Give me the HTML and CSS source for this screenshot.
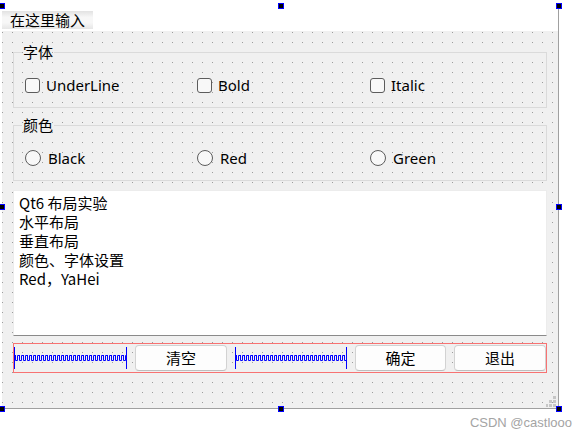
FILE: index.html
```html
<!DOCTYPE html>
<html lang="zh-CN">
<head>
<meta charset="utf-8">
<title>Qt Designer Form</title>
<link rel="stylesheet" href="styles.css">
</head>
<body>
<div class="form">
  <div class="menubar"><span class="menu-item">在这里输入</span></div>
  <div class="central">
    <fieldset class="group">
      <legend>字体</legend>
      <div class="row">
        <label class="opt"><span class="check"></span>UnderLine</label>
        <label class="opt"><span class="check"></span>Bold</label>
        <label class="opt"><span class="check"></span>Italic</label>
      </div>
    </fieldset>
    <fieldset class="group group-color">
      <legend>颜色</legend>
      <div class="row">
        <label class="opt"><span class="radio"></span>Black</label>
        <label class="opt"><span class="radio"></span>Red</label>
        <label class="opt"><span class="radio"></span>Green</label>
      </div>
    </fieldset>
    <div class="editor">Qt6 布局实验<br>水平布局<br>垂直布局<br>颜色、字体设置<br>Red，YaHei</div>
    <div class="buttons">
      <div class="spacer">
        <svg width="113" height="28" viewBox="0 0 113 28">
          <defs>
            <pattern id="zz1" x="1" y="11" width="4" height="6" patternUnits="userSpaceOnUse">
              <path d="M0.5 0 V5.5 H2.5 V0.5 H4.5" fill="none" stroke="#0000ff" stroke-width="1"/>
            </pattern>
          </defs>
          <rect x="0" y="3" width="1" height="22" fill="#0000ff"/>
          <rect x="1" y="11" width="111" height="6" fill="url(#zz1)"/>
          <rect x="112" y="3" width="1" height="22" fill="#0000ff"/>
        </svg>
      </div>
      <button class="btn">清空</button>
      <div class="spacer spacer-b">
        <svg width="112" height="28" viewBox="0 0 112 28">
          <defs>
            <pattern id="zz2" x="1" y="11" width="4" height="6" patternUnits="userSpaceOnUse">
              <path d="M0.5 0 V5.5 H2.5 V0.5 H4.5" fill="none" stroke="#0000ff" stroke-width="1"/>
            </pattern>
          </defs>
          <rect x="0" y="3" width="1" height="22" fill="#0000ff"/>
          <rect x="1" y="11" width="110" height="6" fill="url(#zz2)"/>
          <rect x="111" y="3" width="1" height="22" fill="#0000ff"/>
        </svg>
      </div>
      <button class="btn btn-narrow">确定</button>
      <button class="btn">退出</button>
    </div>
    <svg class="grip" width="10" height="11" viewBox="0 0 10 11">
      <rect x="7" y="0" width="3" height="3" fill="#c6c6c6"/>
      <rect x="3" y="4" width="3" height="3" fill="#c6c6c6"/>
      <rect x="7" y="4" width="3" height="3" fill="#c6c6c6"/>
      <rect x="0" y="8" width="2" height="3" fill="#c6c6c6"/>
      <rect x="3" y="8" width="3" height="3" fill="#c6c6c6"/>
      <rect x="7" y="8" width="3" height="3" fill="#c6c6c6"/>
    </svg>
  </div>
  <span class="handle h-tl"></span>
  <span class="handle h-tm"></span>
  <span class="handle h-tr"></span>
  <span class="handle h-ml"></span>
  <span class="handle h-mr"></span>
  <span class="handle h-bl"></span>
  <span class="handle h-bm"></span>
  <span class="handle h-br"></span>
</div>
<div class="watermark">CSDN @castlooo</div>
</body>
</html>
```

FILE: styles.css
```css
* { box-sizing: border-box; }

html, body {
  margin: 0;
  padding: 0;
  background: #ffffff;
}

body {
  font-family: "Noto Sans", "Noto Sans CJK SC", sans-serif;
  font-size: 15px;
  color: #000;
}

.form {
  position: relative;
  margin: 6px 0 0 2px;
  width: 557px;
  height: 403px;
  border-right: 1px solid #a0a0a0;
  border-bottom: 1px solid #a0a0a0;
  display: flex;
  flex-direction: column;
}

.menubar {
  height: 25px;
  padding-top: 4px;
  background: #ffffff;
}

.menu-item {
  display: inline-block;
  height: 18px;
  line-height: 18px;
  padding: 0 8px;
  font-family: "Noto Sans CJK SC", sans-serif;
  background: linear-gradient(#e2e2e2, #f7f7f7 35%, #f7f7f7 65%, #e6e6e6);
}

.central {
  position: relative;
  flex: 1;
  background-color: #f0f0f0;
  background-image: conic-gradient(from 270deg at 1px 1px, #9c9c9c 90deg, transparent 0);
  background-size: 10px 10px;
  background-position: 0 1px;
  padding: 0 11px;
  display: flex;
  flex-direction: column;
}

.group {
  margin: 14px 0 0;
  padding: 15px 0 11px 11px;
  border: 1px solid #dadada;
  min-width: 0;
}

.group legend {
  margin-left: -3px;
  padding: 0 1px;
  line-height: 14px;
  font-family: "Noto Sans CJK SC", sans-serif;
}

.group-color {
  margin-top: 10px;
}

.row {
  display: grid;
  grid-template-columns: 172px 173px 1fr;
  height: 22px;
  align-items: center;
}

.opt {
  display: flex;
  align-items: center;
  line-height: 22px;
}

.check {
  width: 15px;
  height: 15px;
  border: 1px solid #5c5c5c;
  border-radius: 3px;
  background: #f8f8f8;
  margin-right: 6px;
}

.radio {
  width: 16px;
  height: 16px;
  border: 1px solid #5c5c5c;
  border-radius: 50%;
  background: #f8f8f8;
  margin-right: 7px;
}

.editor {
  margin-top: 9px;
  height: 146px;
  background: #ffffff;
  border: 1px solid #ececec;
  border-bottom-color: #8a8a8a;
  padding: 2px 5px;
  font-family: "Noto Sans CJK SC", sans-serif;
  line-height: 19px;
}

.buttons {
  margin-top: 7px;
  height: 30px;
  border: 1px solid #f77272;
  display: flex;
  gap: 8px;
  align-items: center;
}

.spacer {
  width: 113px;
  height: 28px;
  flex: none;
}

.spacer svg { display: block; }

.spacer-b { width: 112px; }

.btn {
  flex: none;
  width: 92px;
  height: 26px;
  padding: 0;
  border: 1px solid #d2d2d2;
  border-bottom-color: #bdbdbd;
  border-radius: 4px;
  background: #fdfdfd;
  color: #000;
  font-family: "Noto Sans CJK SC", sans-serif;
  font-size: 15px;
  line-height: 24px;
}

.btn-narrow { width: 91px; }

.grip {
  position: absolute;
  right: 2px;
  bottom: 1px;
  display: block;
}

.handle {
  position: absolute;
  width: 6px;
  height: 6px;
  background: #000;
  border: 1px solid #0000ff;
}

.h-tl { left: -3px; top: -3px; }
.h-tm { left: 276px; top: -3px; }
.h-tr { left: 554px; top: -3px; }
.h-ml { left: -3px; top: 198px; }
.h-mr { left: 554px; top: 198px; }
.h-bl { left: -3px; top: 400px; }
.h-bm { left: 276px; top: 400px; }
.h-br { left: 554px; top: 400px; }

.watermark {
  margin-top: 6px;
  padding-right: 15px;
  text-align: right;
  font-family: "Liberation Sans", Arial, sans-serif;
  font-size: 13px;
  line-height: 15px;
  color: #a4a4a4;
}
```
